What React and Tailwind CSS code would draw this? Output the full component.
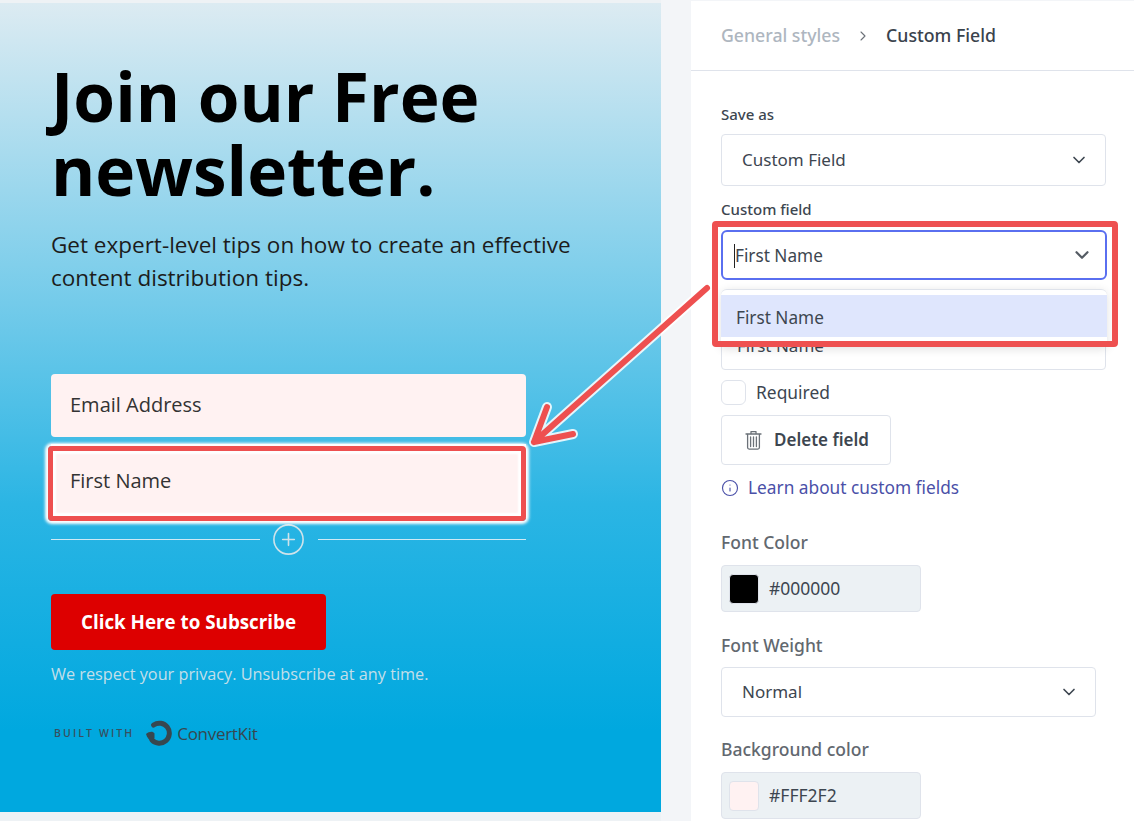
import React from "react";
import { ChevronDown, ChevronRight, CirclePlus, Info } from "lucide-react";

function TrashIcon() {
  return (
    <svg width="17" height="20" viewBox="0 0 17 20" fill="none" stroke="#6b7178" strokeWidth="1.3" strokeLinecap="round" strokeLinejoin="round">
      <path d="M1 4h15" />
      <path d="M6 3.6V1.6h5v2" />
      <path d="M2.6 4.4v13.2c0 .9.6 1.5 1.5 1.5h8.8c.9 0 1.5-.6 1.5-1.5V4.4" />
      <path d="M5.6 7v9.6M8.5 7v9.6M11.4 7v9.6" />
    </svg>
  );
}

function ConvertKitLogo() {
  return (
    <svg width="27" height="26" viewBox="0 0 27 26" fill="none">
      <path d="M8.6 5A10 10 0 1 1 7 20" stroke="#37474f" strokeWidth="5" strokeLinecap="round" />
      <path d="M1 14C4 11.5 8 11 9.5 13.5L9.5 18L6.5 21.5C3.5 19.5 2 17 1 14Z" fill="#37474f" />
    </svg>
  );
}

function SelectBox({ label, width }) {
  return (
    <div className={`flex items-center justify-between rounded border border-[#dfe3eb] bg-white pl-5 pr-4 text-[17px] text-[#3d4650] ${width}`}>
      <span>{label}</span>
      <ChevronDown size={20} strokeWidth={2} className="text-[#3d4650]" />
    </div>
  );
}

function ColorBox({ swatch, value }) {
  return (
    <div className="flex h-[47px] w-[200px] items-center gap-[10px] rounded-sm border border-[#dfe3eb] bg-[#ecf1f4] pl-[7px]">
      <div className={`h-[30px] w-[30px] rounded-sm border border-[#dfe3eb] ${swatch}`} />
      <span className="text-[17.5px] text-[#3d4650]">{value}</span>
    </div>
  );
}

export default function App() {
  return (
    <div className="relative flex h-[821px] w-[1134px] overflow-hidden bg-[#f3f5f8] font-['Noto_Sans',sans-serif]">
      {/* Form preview */}
      <div className="h-[821px] w-[661px] bg-[#eef2f5] pt-[3px]">
        <div className="h-[809px] bg-[linear-gradient(180deg,#dcebf2_0%,#74cbea_37%,#2bb5e4_62%,#00a8df_90%)] pl-[51px] pt-14 font-['Open_Sans',sans-serif]">
          <h1 className="w-[520px] text-[67.5px] leading-[74px] font-bold text-black">Join our Free newsletter.</h1>
          <p className="mt-[21px] w-[570px] text-[22.5px] leading-[33px] text-[#1c1c1c]">
            Get expert-level tips on how to create an effective content distribution tips.
          </p>
          <div className="mt-20 flex h-[63px] w-[475px] items-center rounded bg-[#fff2f2] pb-[2px] pl-[19px] text-[20px] text-[#333]">Email Address</div>
          <div className="mt-[7px] flex h-[74px] w-[475px] items-center bg-[#fff2f2] pl-[19px] text-[20px] text-[#333]">First Name</div>
          <div className="mt-1 flex w-[475px] items-center">
            <div className="h-px flex-1 bg-[#cfeaf5]" />
            <CirclePlus size={35} strokeWidth={1.1} className="mx-[11.5px] text-[#cfe3ea]" />
            <div className="h-px flex-1 bg-[#cfeaf5]" />
          </div>
          <div className="mt-[37px] flex h-[56px] w-[275px] items-center justify-center rounded bg-[#dd0000] text-[18.8px] font-bold text-white">Click Here to Subscribe</div>
          <p className="mt-3 text-[16.25px] text-[#c3dfe9]">We respect your privacy. Unsubscribe at any time.</p>
          <div className="mt-[34px] flex items-center pl-[3px]">
            <span className="text-[10.5px] font-semibold tracking-[2.1px] text-[#37505f]">BUILT WITH</span>
            <span className="ml-[11px]"><ConvertKitLogo /></span>
            <span className="ml-[5px] text-[17px] font-medium tracking-[-0.3px] text-[#37474f]">ConvertKit</span>
          </div>
        </div>
      </div>

      {/* Settings panel */}
      <div className="ml-[30px] mt-px flex-1 bg-white">
        <div className="flex h-[70px] items-center border-b border-[#dfe3eb] pl-[30px] text-[17.7px] font-medium">
          <span className="text-[#aeb6bf]">General styles</span>
          <ChevronRight size={16} strokeWidth={1.6} className="mx-[15px] text-[#6b7178]" />
          <span className="text-[#3a424c]">Custom Field</span>
        </div>
        <div className="relative pl-[30px]">
          <label className="mt-[33px] block text-[15px] leading-[20px] font-medium text-[#3d4650]">Save as</label>
          <SelectBox label="Custom Field" width="mt-[10px] h-[52px] w-[385px]" />
          <label className="mt-[13px] block text-[15px] leading-[20px] font-medium text-[#3d4650]">Custom field</label>
          <div className="relative mt-[11px] flex h-[50px] w-[386px] items-center justify-between rounded-md border-2 border-[#5a6ff0] bg-white pl-[11px] pr-[12px] text-[17.2px] text-[#3d4650]">
            <span className="mt-px border-l border-[#222] leading-[24px]">First Name</span>
            <ChevronDown size={22} strokeWidth={2.4} className="text-[#555c64]" />
          </div>
          <div className="mt-[44px] flex h-[46px] w-[385px] items-center rounded-b border border-[#dfe3eb] pl-[15px] text-[17px] text-[#3d4650]">
            <span className="-mt-[2px]">First Name</span>
          </div>

          <div className="mt-[10px] flex items-center gap-[10px] text-[17.4px] leading-[25px] text-[#3d4650]">
            <div className="h-[25px] w-[25px] rounded-md border border-[#dfe3eb]" />
            <span>Required</span>
          </div>
          <div className="mt-[10px] flex h-[50px] w-[170px] items-center gap-[12px] rounded border border-[#dfe3eb] pl-[23px] text-[17px] font-semibold text-[#3d4650]">
            <TrashIcon />
            <span>Delete field</span>
          </div>
          <div className="mt-[11px] flex h-[24px] items-center gap-[9px] text-[17.3px] text-[#4a50a8]">
            <Info size={18} strokeWidth={1.5} />
            <span>Learn about custom fields</span>
          </div>
          <label className="mt-[30px] block text-[17.5px] leading-[24px] font-medium text-[#62686f]">Font Color</label>
          <div className="mt-[11px]"><ColorBox swatch="bg-black" value="#000000" /></div>
          <label className="mt-[21px] block text-[17.5px] leading-[24px] font-medium text-[#62686f]">Font Weight</label>
          <SelectBox label="Normal" width="mt-[10px] h-[50px] w-[375px]" />
          <label className="mt-5 block text-[17.5px] leading-[24px] font-medium text-[#62686f]">Background color</label>
          <div className="mt-[11px]"><ColorBox swatch="bg-[#fff2f2]" value="#FFF2F2" /></div>
        </div>
      </div>

      {/* Open dropdown */}
      <div className="absolute left-[721px] top-[289px] h-[58px] w-[386px] rounded-t-md border-t border-[#dfe3eb] bg-white pt-[5px] shadow-[0_2px_10px_rgba(0,0,0,0.12)]">
        <div className="flex h-[42px] items-center bg-[#dfe6fd] pl-[15px] pt-[4px] text-[17.2px] text-[#3d4650]">First Name</div>
      </div>

      {/* Annotations */}
      <div className="absolute left-[48px] top-[446px] h-[75px] w-[478px] rounded-sm border-[5px] border-[#ee5050] shadow-[0_0_3px_3px_#ffffff,inset_0_0_2px_3px_#ffffff]" />
      <div className="absolute left-[712px] top-[221px] h-[126px] w-[406px] rounded-sm border-[6px] border-[#ee5050]" />
      <svg className="absolute left-0 top-0" width="1134" height="821" fill="none" strokeLinecap="round" strokeLinejoin="round">
        <path d="M707 288L534 442M547 407L534 442L573 434" stroke="#ffffff" strokeOpacity="0.85" strokeWidth="10" />
        <path d="M707 288L534 442M547 407L534 442L573 434" stroke="#ee5050" strokeWidth="6" />
      </svg>
    </div>
  );
}
